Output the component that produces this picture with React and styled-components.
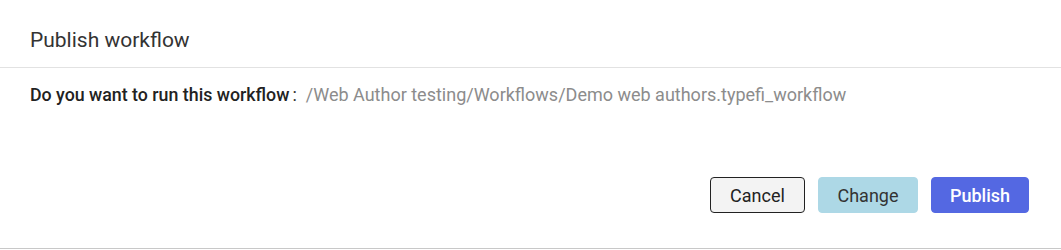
import styled, { createGlobalStyle } from "styled-components";

const GlobalStyle = createGlobalStyle`
  * {
    box-sizing: border-box;
  }
  body {
    margin: 0;
    background: #ffffff;
    font-family: Roboto, "Liberation Sans", sans-serif;
  }
`;

const Dialog = styled.div`
  width: 1061px;
  height: 249px;
  display: flex;
  flex-direction: column;
  background: #ffffff;
  border-bottom: 1px solid #c8c8c8;
`;

const Header = styled.div`
  height: 68px;
  display: flex;
  align-items: center;
  padding: 12px 30px 0;
  border-bottom: 1px solid #e2e2e2;
`;

const Title = styled.h2`
  margin: 0;
  font-size: 21px;
  font-weight: 400;
  color: #333333;
`;

const Body = styled.div`
  padding: 15px 30px 0;
  font-size: 18px;
  line-height: 24px;
  color: #333333;
  flex: 1;
`;

const Label = styled.span`
  font-size: 17.8px;
  font-weight: 500;
  color: #222222;
  margin-right: 3px;
`;

const Path = styled.span`
  color: #8c8c8c;
  margin-left: 9px;
`;

const Footer = styled.div`
  display: flex;
  justify-content: flex-end;
  gap: 13px;
  padding: 0 32px 35px;
`;

const variants = {
  cancel: "background: #f3f3f3; color: #222222; border: 1px solid #222222;",
  change: "background: #add8e6; color: #333333; border: 1px solid #add8e6;",
  publish: "background: #5468e2; color: #ffffff; border: 1px solid #5468e2; font-weight: 500;",
};

const Button = styled.button`
  height: 36px;
  min-width: ${({ $w }) => $w}px;
  padding: 0 16px;
  border-radius: 4px;
  font-family: Roboto, "Liberation Sans", sans-serif;
  font-size: 18px;
  cursor: pointer;
  ${({ $variant }) => variants[$variant]}
`;

export default function App() {
  return (
    <>
      <GlobalStyle />
      <Dialog>
        <Header>
          <Title>Publish workflow</Title>
        </Header>
        <Body>
          <Label>Do you want to run this workflow</Label>:
          <Path>/Web Author testing/Workflows/Demo web authors.typefi_workflow</Path>
        </Body>
        <Footer>
          <Button $variant="cancel" $w={95}>Cancel</Button>
          <Button $variant="change" $w={100}>Change</Button>
          <Button $variant="publish" $w={98}>Publish</Button>
        </Footer>
      </Dialog>
    </>
  );
}
